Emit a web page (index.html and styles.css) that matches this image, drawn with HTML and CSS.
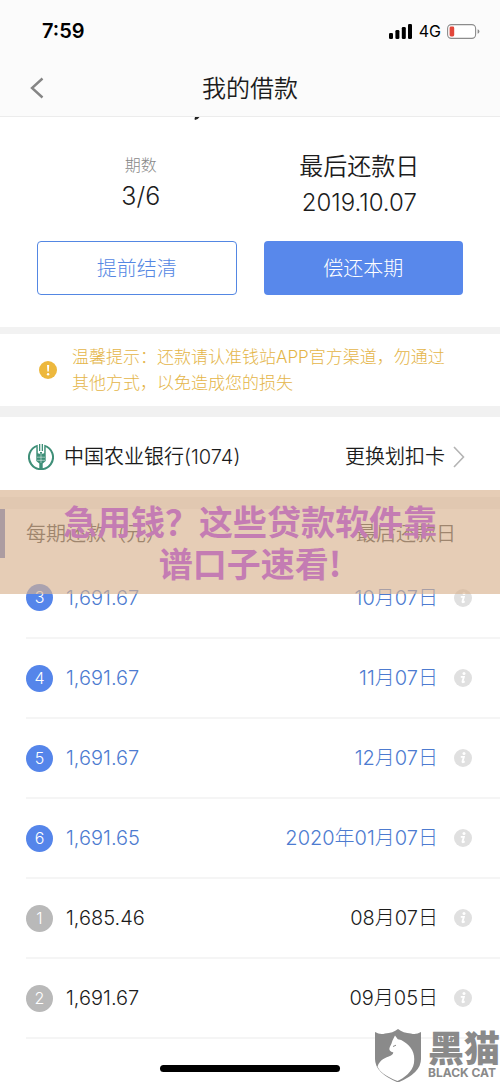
FILE: index.html
```html
<!DOCTYPE html>
<html lang="zh-CN">
<head>
<meta charset="utf-8">
<meta name="viewport" content="width=device-width, initial-scale=1">
<title>我的借款</title>
<link rel="stylesheet" href="styles.css">
</head>
<body>
<svg class="defs" aria-hidden="true">
  <symbol id="info" viewBox="0 0 18 18">
    <circle cx="9" cy="9" r="9" fill="#e0e0e0"/>
    <circle cx="10" cy="4.6" r="1.5" fill="#fff"/>
    <path d="M6.8 7.8h3.100l-1.400 4.600q-.2 1 .7.8l1.500-.8" fill="none" stroke="#fff" stroke-width="1.800"/>
  </symbol>
</svg>
<div class="app">
  <header class="top">
    <div class="status">
      <span class="clock">7:59</span>
      <span class="signals">
        <svg class="bars" viewBox="0 0 24 15" aria-hidden="true"><rect x="0" y="9" width="4" height="6" rx="1.3"/><rect x="6.4" y="6" width="4" height="9" rx="1.3"/><rect x="12.8" y="3" width="4" height="12" rx="1.3"/><rect x="19" y="0" width="4" height="15" rx="1.3"/></svg>
        <span class="network">4G</span>
        <svg class="battery" viewBox="0 0 33 15" aria-hidden="true"><rect x=".6" y=".6" width="28" height="13.8" rx="3.8" fill="#fff" stroke="#8c8c8c" stroke-width="1.1"/><rect x="2.6" y="2.6" width="4.6" height="9.8" rx="1.4" fill="#e2473b"/><path d="M30.600 5.200q1.800.5 1.800 2.300t-1.800 2.300z" fill="#8c8c8c"/></svg>
      </span>
    </div>
    <div class="nav">
      <button class="back" type="button" aria-label="返回"><svg viewBox="0 0 14 22" aria-hidden="true"><path d="M12.500 1.500L2 11l10.500 9.500" fill="none" stroke="#858585" stroke-width="2.400"/></svg></button>
      <h1>我的借款</h1>
    </div>
  </header>
  <main>
    <section class="summary">
      <svg class="scrolled" viewBox="0 0 6 4" aria-hidden="true"><path d="M1 0h4.500Q4 2.400 1 3 0 2.500 1 0z" fill="#222"/></svg>
      <div class="facts">
        <div class="term"><p class="label">期数</p><p class="value">3/6</p></div>
        <div class="due"><p>最后还款日</p><p>2019.10.07</p></div>
      </div>
      <div class="actions">
        <button class="outline" type="button">提前结清</button>
        <button class="solid" type="button">偿还本期</button>
      </div>
    </section>
    <section class="notice">
      <svg viewBox="0 0 18 18" aria-hidden="true"><circle cx="9" cy="9" r="9" fill="#edb83d"/><path d="M8 4h2.200l-.4 6.500H8.400z" fill="#fff"/><circle cx="9.100" cy="13.300" r="1.200" fill="#fff"/></svg>
      <p>温馨提示：还款请认准钱站APP官方渠道，勿通过其他方式，以免造成您的损失</p>
    </section>
    <section class="bank">
      <svg class="bank-logo" viewBox="0 0 26 26" aria-hidden="true"><path d="M9.800 1.600A12 12 0 1 0 16.200 1.600" fill="none" stroke="#3f8f78" stroke-width="2"/><g fill="#3f8f78"><path d="M11 0h1.300v7H11zM13.700 0H15v7h-1.300zM8.300 3h1.500v6.200L12.400 10v15h-1.100v-5.500L8.300 17zM17.700 3h-1.500v6.200l-2.600.8v15h1.100v-5.500l3-2.500z"/><path d="M12 8h2v17h-2z"/></g><path d="M9 13.200h8M9 16.300h8M13 9v10" stroke="#fff" stroke-width=".5"/></svg>
      <span class="bank-name">中国农业银行(1074)</span>
      <button class="change" type="button">更换划扣卡<svg viewBox="0 0 12 22" aria-hidden="true"><path d="M1 1l9.500 10L1 21" fill="none" stroke="#b4b4b4" stroke-width="1.600"/></svg></button>
    </section>
    <section class="schedule">
      <span class="edge"></span>
      <table>
        <thead><tr><th scope="col">每期还款（元）</th><th scope="col" class="date-head">最后还款日</th></tr></thead>
        <tbody>
          <tr><td><div class="amount"><span class="badge">3</span>1,691.67</div></td><td><div class="date">10月07日<button type="button" aria-label="详情"><svg><use href="#info"/></svg></button></div></td></tr>
          <tr><td><div class="amount"><span class="badge">4</span>1,691.67</div></td><td><div class="date">11月07日<button type="button" aria-label="详情"><svg><use href="#info"/></svg></button></div></td></tr>
          <tr><td><div class="amount"><span class="badge">5</span>1,691.67</div></td><td><div class="date">12月07日<button type="button" aria-label="详情"><svg><use href="#info"/></svg></button></div></td></tr>
          <tr><td><div class="amount"><span class="badge">6</span>1,691.65</div></td><td><div class="date">2020年01月07日<button type="button" aria-label="详情"><svg><use href="#info"/></svg></button></div></td></tr>
          <tr class="paid"><td><div class="amount"><span class="badge">1</span>1,685.46</div></td><td><div class="date">08月07日<button type="button" aria-label="详情"><svg><use href="#info"/></svg></button></div></td></tr>
          <tr class="paid"><td><div class="amount"><span class="badge">2</span>1,691.67</div></td><td><div class="date">09月05日<button type="button" aria-label="详情"><svg><use href="#info"/></svg></button></div></td></tr>
        </tbody>
      </table>
      <p class="banner">急用钱？这些贷款软件靠谱口子速看!</p>
    </section>
  </main>
  <footer><span class="home"></span></footer>
  <div class="mark">
    <svg viewBox="0 0 46 54" aria-hidden="true"><path d="M0 3Q5 6 10 4.500 18 4 23 0q5 4 13 4.500Q41 6 46 3v27q0 14-23 23.500Q0 44 0 30z" fill="#8a8a8a"/><path d="M2.500 37.500C5 30.500 10 29 16 26.500q2.500-1.300 2.300-3.300-2 .2-3.500-1.700-1-1.500 0-3.500 1.800-3 2.700-6.500L20 6.500l2.800 3.700q3.700.1 6.200 2.600C36 17 40.500 24 39 34 37.500 43 29 49 22.500 52 10 47 4.500 42.500 2.500 37.500z" fill="#fff"/><path d="M18 17.500l3-1.300" stroke="#8a8a8a" stroke-width="1"/></svg>
    <div class="mark-text"><span class="mark-cn">黑猫</span><span class="mark-en">BLACK CAT</span></div>
  </div>
</div>
</body>
</html>
```
FILE: styles.css
```css
* { box-sizing: border-box; }
body {
  margin: 0;
  background: #fff;
  color: #1c1c1c;
  font: 300 20px/28px Inter, "Noto Sans CJK SC", sans-serif;
}
h1, p { margin: 0; font-weight: inherit; }
button {
  padding: 0;
  border: 0;
  background: none;
  color: inherit;
  font: inherit;
  cursor: pointer;
}
svg { display: block; flex: none; }
.defs { position: absolute; width: 0; height: 0; }
.app { position: relative; min-height: 100vh; }

.top { background: #fbfbfb; border-bottom: 1px solid #ececec; }
.status {
  display: flex;
  align-items: center;
  justify-content: space-between;
  height: 60px;
  padding: 2px 20px 0 42px;
  color: #000;
}
.clock { font-size: 20px; font-weight: 600; }
.signals { display: flex; align-items: center; gap: 6px; }
.bars { width: 24px; height: 15px; }
.network { font-size: 16px; font-weight: 400; }
.battery { width: 33px; height: 15px; }
.nav {
  display: grid;
  grid-template-columns: 44px 1fr 44px;
  align-items: center;
  height: 56px;
}
.back { display: flex; justify-content: flex-end; }
.back svg { width: 14px; height: 22px; }
h1 { padding-top: 2px; font-size: 24px; font-weight: 350; text-align: center; }

.summary { position: relative; padding: 32px 37px; }
.scrolled { position: absolute; top: 0; left: 194px; width: 6px; height: 4px; }
.facts, .actions { display: grid; grid-template-columns: 1fr 1fr; gap: 27px; }
.facts { text-align: center; }
.label { padding-top: 2px; font-size: 16px; line-height: 28px; color: #888; }
.term { padding-left: 8px; }
.value { font-size: 25px; line-height: 34px; }
.due { padding-right: 8px; font-size: 24px; font-weight: 350; line-height: 36px; }
.actions { padding-top: 20px; }
.actions button { height: 54px; padding-top: 2px; border-radius: 4px; }
.outline { border: 1px solid #5487e3; color: #5487e3; }
.actions .outline { border: 1px solid #5487e3; }
.solid { background: #5888eb; color: #fff; }
.actions .solid { background: #5888eb; }

.notice {
  display: flex;
  align-items: center;
  gap: 15px;
  padding: 10px 40px 10px 39px;
  border-top: 7px solid #f2f2f2;
  border-bottom: 11px solid #f1f1f1;
  color: #e4b548;
  font-size: 17px;
  line-height: 26px;
}
.notice svg { width: 18px; height: 18px; }

.bank {
  display: flex;
  align-items: center;
  height: 80px;
  padding: 0 35px 0 28px;
  font-weight: 350;
}
.bank-logo { width: 26px; height: 26px; }
.bank-name { padding-left: 10px; }
.change { display: flex; align-items: center; gap: 8px; margin-left: auto; }
.change svg { width: 12px; height: 22px; }

.schedule { position: relative; padding-left: 26px; border-top: 12px solid #f1f1f1; }
.edge { position: absolute; top: 0; left: 0; width: 5px; height: 49px; background: #5b73c2; }
table { width: 100%; border-collapse: collapse; }
th { height: 49px; padding: 0; font-weight: 350; text-align: left; color: #333; }
.date-head { padding-right: 44px; text-align: right; }
td { height: 80px; padding: 0; border-bottom: 2px solid #f5f5f5; color: #4d7bd0; }
.amount, .date { display: flex; align-items: center; }
.amount { gap: 13px; }
.badge {
  width: 27px;
  height: 27px;
  border-radius: 50%;
  background: #5585ea;
  color: #fff;
  font-size: 16px;
  line-height: 27px;
  text-align: center;
}
.date { justify-content: flex-end; gap: 16px; padding-right: 28px; }
.date svg { width: 18px; height: 18px; }
.paid td { color: #1c1c1c; }
.paid .badge { background: #b9b9b9; }
.banner {
  position: absolute;
  top: -19px;
  left: 0;
  right: 0;
  padding: 10px 60px;
  background: rgba(217, 178, 143, .65);
  color: #c47cb3;
  font-family: "Noto Sans CJK SC", sans-serif;
  font-size: 34px;
  font-weight: 700;
  line-height: 42px;
  text-align: center;
}

footer { display: flex; justify-content: center; padding: 26px 0 11px; }
.home { width: 36%; height: 7px; border-radius: 4px; background: #000; }
.mark {
  position: absolute;
  right: 0;
  bottom: 0;
  display: flex;
  gap: 7px;
  color: #8a8a8a;
}
.mark svg { width: 46px; height: 54px; }
.mark-text { display: flex; flex-direction: column; padding-top: 3px; }
.mark-cn { font-size: 36px; font-weight: 900; line-height: 34px; }
.mark-en { font-size: 12px; font-weight: 700; line-height: 14px; white-space: nowrap; }
```
